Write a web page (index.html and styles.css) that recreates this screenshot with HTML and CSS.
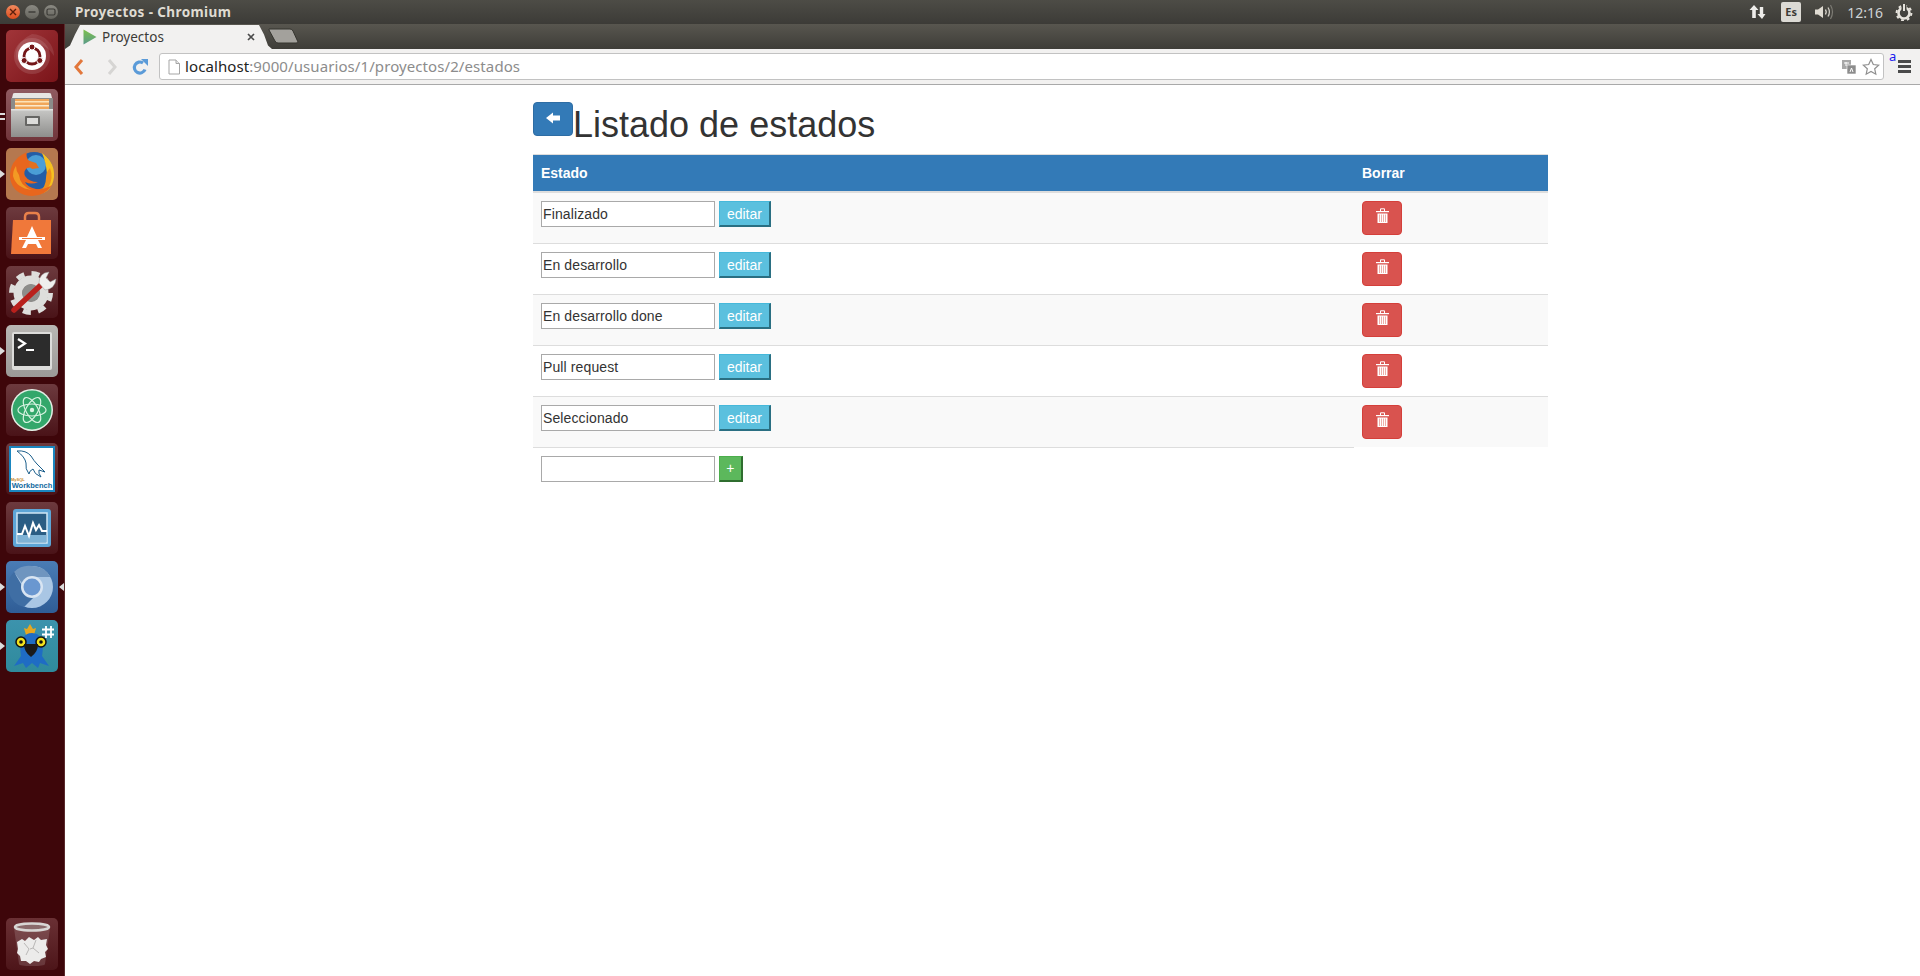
FILE: index.html
```html
<!DOCTYPE html>
<html>
	<head>
		<meta charset="utf-8">
		<title>Proyectos - Chromium</title>
		<link rel="stylesheet" href="styles.css">
	</head>
	<body>
		<div class="topbar">
			<div class="win-buttons">
				<span class="win-btn win-close">
					<svg viewBox="0 0 8 8" width="8" height="8"><path d="M1 1l6 6M7 1L1 7" stroke="#5c1f0c" stroke-width="1.4"/></svg>
				</span>
				<span class="win-btn">
					<svg viewBox="0 0 8 8" width="8" height="8"><path d="M0.5 4h7" stroke="#3b3a36" stroke-width="1.4"/></svg>
				</span>
				<span class="win-btn">
					<svg viewBox="0 0 10 8" width="10" height="8"><rect x="1" y="1" width="8" height="6" rx="1.5" fill="none" stroke="#3b3a36" stroke-width="1.2"/></svg>
				</span>
			</div>
			<div class="win-title">Proyectos - Chromium</div>
			<div class="tray">
				<svg class="tray-arrows" viewBox="0 0 18 16" width="18" height="16">
					<path d="M5 1l4.500 5H6.800v8H3.200V6H.5zM13 15l-4.500-5h2.300V3h3.400v7h2.300z" fill="#eeedea"/>
				</svg>
				<span class="tray-lang">Es</span>
				<svg class="tray-sound" viewBox="0 0 20 18" width="20" height="18">
					<path d="M1 6.500h3L9 3v12l-5-3.500H1z" fill="#dfdbd2"/>
					<path d="M11.500 6.500q1.500 2.500 0 5" fill="none" stroke="#dfdbd2" stroke-width="1.400"/>
					<path d="M14 4.500q2.800 4.500 0 9" fill="none" stroke="#cfccc4" stroke-width="1.300"/>
					<path d="M16.500 2q4 7 0 14" fill="none" stroke="#7d7b74" stroke-width="1.200"/>
				</svg>
				<span class="tray-clock">12:16</span>
				<svg class="tray-gear" viewBox="0 0 18 18" width="18" height="18">
					<circle cx="9" cy="10" r="5.500" fill="none" stroke="#e6e3dc" stroke-width="2.600"/>
					<circle cx="9" cy="10" r="7.400" fill="none" stroke="#e6e3dc" stroke-width="2" stroke-dasharray="2.800 3"/>
					<rect x="6.500" y="1" width="5" height="6" fill="#45443f"/>
					<path d="M9 1v7" stroke="#e6e3dc" stroke-width="2"/>
				</svg>
			</div>
		</div>

		<div class="desktop">
			<div class="launcher">
				<div class="tile tile-ubuntu">
					<svg viewBox="0 0 52 52">
						<path d="M26 4a22 22 0 0 1 22 22q-8-14-22-11-12 3-15 16Q6 14 26 4z" fill="#fff" fill-opacity=".1"/>
						<circle cx="26" cy="26" r="18" fill="#fff" fill-opacity=".12"/>
						<circle cx="26" cy="26" r="14" fill="#fff"/>
						<circle cx="26" cy="26" r="8" fill="none" stroke="#741719" stroke-width="2.800"/>
						<circle cx="26" cy="17" r="3" fill="#741719" stroke="#fff"/>
						<circle cx="18.200" cy="30.500" r="3" fill="#741719" stroke="#fff"/>
						<circle cx="33.800" cy="30.500" r="3" fill="#741719" stroke="#fff"/>
					</svg>
				</div>
				<div class="tile tile-files">
					<span class="pip pip-double"></span>
					<svg viewBox="0 0 52 52">
						<defs>
							<linearGradient id="cabinet" x1="0" y1="0" x2="0" y2="1">
								<stop offset="0" stop-color="#c8c8c6"/>
								<stop offset="1" stop-color="#8e8e8c"/>
							</linearGradient>
						</defs>
						<path d="M7 5q0-1 2-1h34q2 0 2 1l2 8H5z" fill="#e6e6e4"/>
						<rect x="5" y="9" width="42" height="38" rx="1" fill="#8b8b89"/>
						<rect x="9" y="10" width="34" height="12" fill="#f0a65a"/>
						<rect x="9" y="12" width="34" height="1.500" fill="#fde3b8"/>
						<rect x="9" y="16" width="34" height="1.500" fill="#fbe9cc"/>
						<path d="M5 20h42v28H5z" fill="url(#cabinet)"/>
						<rect x="5" y="20" width="42" height="1.500" fill="#e2e2e0"/>
						<rect x="19" y="27" width="15" height="10" rx="1" fill="#666664"/>
						<rect x="21" y="29" width="11" height="6" fill="#dcdcda"/>
					</svg>
				</div>
				<div class="tile tile-firefox">
					<span class="pip"></span>
					<svg viewBox="0 0 52 52">
						<circle cx="28" cy="23" r="19" fill="#245da6"/>
						<circle cx="30" cy="17" r="10" fill="#4a9ed6"/>
						<path d="M36 5q13 9 12 24-2 15-15 17 9-9 8-20-1-12-5-21z" fill="#f6c020"/>
						<path d="M44 20q4 10-2 20-4 4-9 6 7-8 7-16 0-6 4-10z" fill="#ef8f1e"/>
						<path d="M21 4Q3 12 4 30q3 17 22 18 13 0 20-11-7 5-16 4-9-2-11-7 7 3 13 0-9 0-13-6-2-5 2-8 3-1 6 0-4-3-3-7-5-1-3-13z" fill="#e8661d"/>
						<path d="M13 27q1 11 13 15-16-2-19-14 0-6 3-10 0 5 3 9z" fill="#f39a24"/>
						<path d="M24 13l6 2 3 5-7 1-3-3z" fill="#e2701f"/>
					</svg>
				</div>
				<div class="tile tile-software">
					<svg viewBox="0 0 52 52">
						<path d="M19 13v-3q0-4 4-4h6q4 0 4 4v3" fill="none" stroke="#e8814a" stroke-width="2.500"/>
						<path d="M7 13h38v34H5z" fill="#f0783a"/>
						<path d="M26 19l5 11H21zM20 33h12l4 8h-4l-2-4h-8l-2 4h-4z" fill="#fff"/>
						<rect x="13" y="30" width="26" height="3" fill="#fff"/>
						<rect x="16" y="31" width="20" height="1" fill="#f0783a"/>
					</svg>
				</div>
				<div class="tile tile-settings">
					<svg viewBox="0 0 52 52">
						<circle cx="25" cy="27" r="13" fill="none" stroke="#dededc" stroke-width="9"/>
						<circle cx="25" cy="27" r="19.500" fill="none" stroke="#dededc" stroke-width="5" stroke-dasharray="8 7.300"/>
						<circle cx="25" cy="27" r="9" fill="#8d8d8b"/>
						<path d="M8 44L36 18" stroke="#b9201c" stroke-width="5.500" stroke-linecap="round"/>
						<path d="M33 17q0-10 10-11l-3 6 4 4 6-3q-1 10-11 11z" fill="#efefed" stroke="#9c9c9a" stroke-width=".5"/>
					</svg>
				</div>
				<div class="tile tile-terminal">
					<span class="pip"></span>
					<svg viewBox="0 0 52 52">
						<rect x="6" y="7" width="40" height="38" rx="2" fill="#dcdcda"/>
						<rect x="8" y="9" width="36" height="32" fill="#2c2c2c"/>
						<path d="M12 14l7 4.500-7 4.500" fill="none" stroke="#fff" stroke-width="2.200"/>
						<rect x="20" y="24" width="8" height="2" fill="#fff"/>
					</svg>
				</div>
				<div class="tile tile-atom">
					<svg viewBox="0 0 52 52">
						<circle cx="26" cy="26" r="21" fill="#e4efe6"/>
						<circle cx="26" cy="26" r="19.500" fill="#33a76b"/>
						<g fill="none" stroke="#d8f3e2" stroke-width="1.200">
							<ellipse cx="26" cy="26" rx="14" ry="6"/>
							<ellipse cx="26" cy="26" rx="14" ry="6" transform="rotate(60 26 26)"/>
							<ellipse cx="26" cy="26" rx="14" ry="6" transform="rotate(120 26 26)"/>
						</g>
						<circle cx="26" cy="26" r="2.200" fill="#d8f3e2"/>
					</svg>
				</div>
				<div class="tile tile-workbench">
					<svg viewBox="0 0 52 52">
						<rect x="3" y="3" width="46" height="46" fill="#1a86c0"/>
						<rect x="5" y="5" width="42" height="42" fill="#fff"/>
						<path d="M11 8q9-1 14 5 3 5 6 8l8 8-6-2q-1 3 2 7-7-3-8-8-4 2-4 5-4-5-3-11-1-6-9-12z" fill="none" stroke="#1c5f8c" stroke-width="1"/>
					</svg>
					<span class="wb-label"><small>MySQL</small>Workbench</span>
				</div>
				<div class="tile tile-monitor">
					<svg viewBox="0 0 52 52">
						<rect x="7" y="7" width="38" height="38" rx="3" fill="#5da5d6"/>
						<rect x="11" y="11" width="30" height="30" fill="#2a5d84" stroke="#cfe6f5" stroke-width="1.500"/>
						<rect x="11.700" y="33" width="28.600" height="7.300" fill="#7fb3d6"/>
						<path d="M11 32h5l3-8 4 10 4-13 3 7 3-5 3 6h5" fill="none" stroke="#fff" stroke-width="2"/>
					</svg>
				</div>
				<div class="tile tile-chromium">
					<span class="pip"></span>
					<span class="pip pip-right"></span>
					<svg viewBox="0 0 52 52">
						<circle cx="26" cy="26" r="21" fill="#a9c6e4"/>
						<path d="M26 5a21 21 0 0 1 18.500 11H26a10 10 0 0 0-9.500 7L8 11a21 21 0 0 1 18-6z" fill="#6f95bf"/>
						<path d="M8 11l10 17a10 10 0 0 0 10 8L18 46A21 21 0 0 1 8 11z" fill="#3f6ea4"/>
						<circle cx="26" cy="26" r="11" fill="#d9e5f2"/>
						<circle cx="26" cy="26" r="8.500" fill="#6a97d0"/>
					</svg>
				</div>
				<div class="tile tile-bird">
					<span class="pip"></span>
					<svg viewBox="0 0 52 52">
						<path d="M24 4l3 5 3-1-2 7h-8l-2-7 3 1z" fill="#e6a820"/>
						<path d="M8 46l7-10q-2-12 2-18 3-5 9-5 7 0 9 6 3 7 1 17l7 10-9-3-2 5-6-5-6 5-3-5z" fill="#1f6cc4"/>
						<circle cx="15" cy="22" r="5" fill="#f2e21e" stroke="#111" stroke-width="1.500"/>
						<circle cx="35" cy="22" r="5" fill="#f2e21e" stroke="#111" stroke-width="1.500"/>
						<circle cx="15" cy="22" r="1.800" fill="#111"/>
						<circle cx="35" cy="22" r="1.800" fill="#111"/>
						<path d="M18 24h14q0 8-7 13-7-5-7-13z" fill="#1a1a1a"/>
						<path d="M40 6v12M45 6v12M36 9.500h12M36 14.500h12" stroke="#fff" stroke-width="1.800"/>
					</svg>
				</div>
				<div class="tile tile-trash">
					<svg viewBox="0 0 52 52">
						<path d="M8 10l5 36q0 2 13 2t13-2l5-36z" fill="#fff" fill-opacity=".14"/>
						<ellipse cx="26" cy="9" rx="17" ry="3.500" fill="#8a6a6b" stroke="#d8d6d4" stroke-width="2.500"/>
						<path d="M11 24l5-3 3 2 4-4 5 3 4-3 3 3 6-1-1 6 2 4-3 3 1 5-5 2-2 3-5-1-4 3-4-3-5 0-1-5-3-3 1-4z" fill="#ecebea"/>
						<path d="M18 25l5 6-3 6M30 22l-3 8 6 5M24 31l3-1" fill="none" stroke="#b9b7b6" stroke-width="1"/>
					</svg>
				</div>
			</div>

			<div class="browser">
				<div class="tabstrip">
					<div class="tab">
						<svg class="tab-favicon" viewBox="0 0 14 16" width="14" height="16">
							<defs>
								<linearGradient id="favicon-grad" x1="0" y1="0" x2="0" y2="1">
									<stop offset="0" stop-color="#7cc04b"/>
									<stop offset="1" stop-color="#5a9a8a"/>
								</linearGradient>
							</defs>
							<path d="M0.500 0.500l13 7.500-13 7.500z" fill="url(#favicon-grad)"/>
						</svg>
						<span class="tab-title">Proyectos</span>
						<svg class="tab-close" viewBox="0 0 8 8" width="8" height="8"><path d="M1 1l6 6M7 1L1 7" stroke="#4a4a4a" stroke-width="1.700"/></svg>
					</div>
					<svg class="newtab" viewBox="0 0 32 16" width="32" height="16">
						<path d="M1 1h21q2 0 3 2l5 11q0 1-2 1H10q-2 0-3-2L1 2z" fill="#a3a19c" stroke="#35342f"/>
					</svg>
				</div>

				<div class="toolbar">
					<svg class="nav-icon nav-back" viewBox="0 0 12 18" width="12" height="18">
						<path d="M9 2L3 9l6 7" fill="none" stroke="#e2773b" stroke-width="3"/>
					</svg>
					<svg class="nav-icon nav-forward" viewBox="0 0 12 18" width="12" height="18">
						<path d="M3 2l6 7-6 7" fill="none" stroke="#d6d5d3" stroke-width="3"/>
					</svg>
					<svg class="nav-icon nav-reload" viewBox="0 0 18 18" width="18" height="18">
						<path d="M14 11.500A5.500 5.500 0 1 1 12 5" fill="none" stroke="#5b9bd8" stroke-width="3.200"/>
						<path d="M10 1h7v7z" fill="#5b9bd8"/>
					</svg>
					<div class="omnibox">
						<svg class="page-icon" viewBox="0 0 14 16" width="14" height="16">
							<path d="M2 1h7l3.500 3.500V15H2z" fill="#fff" stroke="#a5a5a5"/>
							<path d="M9 1v3.500h3.500" fill="#e8e8e8" stroke="#a5a5a5"/>
						</svg>
						<div class="url"><span class="url-host">localhost</span>:9000/usuarios/1/proyectos/2/estados</div>
						<svg class="translate-icon" viewBox="0 0 14 14" width="14" height="14">
							<rect x="0" y="0" width="9" height="9" fill="#a8a8a8"/>
							<rect x="5" y="5" width="9" height="9" fill="#8c8c8c" stroke="#fff" stroke-width=".6"/>
							<path d="M2 3h5M4 2v4" stroke="#fff"/>
							<path d="M8 12l1.500-4 1.500 4" fill="none" stroke="#fff"/>
						</svg>
						<svg class="star-icon" viewBox="0 0 18 18" width="18" height="18">
							<path d="M9 1.500l2.300 5 5.400.6-4 3.700 1.100 5.400L9 13.500l-4.800 2.700 1.100-5.400-4-3.700 5.400-.6z" fill="#fff" stroke="#8e8e8e" stroke-width="1.200"/>
						</svg>
					</div>
					<div class="menu-wrap">
						<span class="ext-a">a</span>
						<div class="hamburger"><i></i><i></i><i></i></div>
					</div>
				</div>

				<div class="page">
					<div class="page-head">
						<button class="btn-back">
							<svg viewBox="0 0 14 12" width="14" height="12"><path d="M7 .5L0 6l7 5.500V8.500h7v-5H7z" fill="#fff"/></svg>
						</button>
						<h1>Listado de estados</h1>
					</div>

					<table class="estados">
						<thead>
							<tr>
								<th class="col-estado">Estado</th>
								<th>Borrar</th>
							</tr>
						</thead>
						<tbody>
							<tr class="odd">
								<td><input type="text" value="Finalizado"> <button class="btn-editar">editar</button></td>
								<td><button class="btn-trash"><svg viewBox="0 0 13 15" width="13" height="15"><use href="#trash"/></svg></button></td>
							</tr>
							<tr>
								<td><input type="text" value="En desarrollo"> <button class="btn-editar">editar</button></td>
								<td><button class="btn-trash"><svg viewBox="0 0 13 15" width="13" height="15"><use href="#trash"/></svg></button></td>
							</tr>
							<tr class="odd">
								<td><input type="text" value="En desarrollo done"> <button class="btn-editar">editar</button></td>
								<td><button class="btn-trash"><svg viewBox="0 0 13 15" width="13" height="15"><use href="#trash"/></svg></button></td>
							</tr>
							<tr>
								<td><input type="text" value="Pull request"> <button class="btn-editar">editar</button></td>
								<td><button class="btn-trash"><svg viewBox="0 0 13 15" width="13" height="15"><use href="#trash"/></svg></button></td>
							</tr>
							<tr class="odd">
								<td><input type="text" value="Seleccionado"> <button class="btn-editar">editar</button></td>
								<td><button class="btn-trash"><svg viewBox="0 0 13 15" width="13" height="15"><use href="#trash"/></svg></button></td>
							</tr>
							<tr>
								<td><input type="text" value=""> <button class="btn-add">+</button></td>
							</tr>
						</tbody>
					</table>
				</div>
			</div>
		</div>

		<svg class="defs" width="0" height="0">
			<symbol id="trash" viewBox="0 0 13 15">
				<path d="M0 3h13v1.200H0z" fill="#fff"/>
				<path d="M4.500 3V.8h4V3" fill="none" stroke="#fff"/>
				<path d="M1.500 5.500h10V15h-10z" fill="#fff"/>
				<path d="M3.500 6.500v7.500M5.500 6.500v7.500M7.500 6.500v7.500M9.500 6.500v7.500" stroke="#eeb0aa" stroke-width="1"/>
			</symbol>
		</svg>
	</body>
</html>
```

FILE: styles.css
```css
html, body {
	margin: 0;
	height: 100%;
}

body {
	display: flex;
	flex-direction: column;
	height: 976px;
	overflow: hidden;
	font-family: "Liberation Sans", Arial, sans-serif;
	font-size: 14px;
	color: #333;
	background: #fff;
}

.defs {
	position: absolute;
}

/* ubuntu panel */
.topbar {
	display: flex;
	align-items: center;
	height: 24px;
	flex: none;
	background: linear-gradient(#4d4c46, #3c3b37);
}

.win-buttons {
	display: flex;
	gap: 5px;
	margin-left: 6px;
	width: 69px;
}

.win-btn {
	display: flex;
	align-items: center;
	justify-content: center;
	width: 14px;
	height: 14px;
	border-radius: 50%;
	background: linear-gradient(#8b8a83, #64635c);
}

.win-close {
	background: linear-gradient(#f28a5e, #dc4c1d);
}

.win-title {
	font-family: "Noto Sans", sans-serif;
	font-size: 13.500px;
	font-weight: 700;
	letter-spacing: .4px;
	color: #dfdbd2;
}

.tray {
	display: flex;
	align-items: center;
	margin-left: auto;
	color: #dfdbd2;
}

.tray-arrows {
	margin-right: 14px;
}

.tray-lang {
	width: 20px;
	height: 20px;
	margin-right: 13px;
	border-radius: 2px;
	background: #dcdad4;
	color: #3c3b37;
	font-family: "Noto Sans", sans-serif;
	font-size: 11px;
	font-weight: 700;
	line-height: 20px;
	text-align: center;
}

.tray-sound {
	margin-right: 13px;
}

.tray-clock {
	margin-right: 12px;
	font-family: "Noto Sans", sans-serif;
	font-size: 14px;
	color: #cfd3d6;
}

.tray-gear {
	margin-right: 7px;
}

.desktop {
	display: flex;
	flex: 1;
	min-height: 0;
}

/* launcher */
.launcher {
	display: flex;
	flex-direction: column;
	gap: 7px;
	flex: none;
	width: 65px;
	padding: 6px 0;
	box-sizing: border-box;
	border-right: 1px solid #5a2a2c;
	background: #3e060a;
}

.tile {
	position: relative;
	flex: none;
	width: 52px;
	height: 52px;
	margin-left: 6px;
	border-radius: 5px;
	background: linear-gradient(#6d3a3e, #4a1318);
}

.tile svg {
	display: block;
	width: 52px;
	height: 52px;
}

.tile-ubuntu {
	background: linear-gradient(135deg, #a13539, #7a1419);
}

.tile-files {
	background: linear-gradient(#8f5a60, #71353b);
}

.tile-firefox {
	background: #b5784f;
}

.tile-terminal {
	background: linear-gradient(#b9b7b4, #9b9997);
}

.tile-chromium {
	background: linear-gradient(#4a7cb5, #2f5d96);
}

.tile-bird {
	background: linear-gradient(#3c93ad, #2f8a9c);
}

.tile-trash {
	margin-top: auto;
	background: linear-gradient(#6a3034, #4d1519);
}

.pip {
	position: absolute;
	left: -6px;
	top: 22px;
	width: 0;
	height: 0;
	border-left: 5px solid #dcdcdc;
	border-top: 4px solid transparent;
	border-bottom: 4px solid transparent;
}

.pip-right {
	left: auto;
	right: -6px;
	border-left: 0;
	border-right: 5px solid #dcdcdc;
}

.pip-double {
	top: 24px;
	width: 5px;
	height: 2px;
	border: 0;
	background: #dcdcdc;
	box-shadow: 0 5px 0 #dcdcdc;
}

.wb-label {
	position: absolute;
	left: 5px;
	right: 5px;
	bottom: 5px;
	color: #126a9e;
	font-size: 7.500px;
	font-weight: 700;
	line-height: 8px;
	text-align: center;
	white-space: nowrap;
}

.wb-label small {
	display: block;
	color: #c98a2e;
	font-size: 4px;
	line-height: 4px;
	text-align: left;
}

/* chromium */
.browser {
	display: flex;
	flex-direction: column;
	flex: 1;
	min-width: 0;
}

.tabstrip {
	display: flex;
	align-items: flex-end;
	flex: none;
	height: 25px;
	background: linear-gradient(#58564f, #3e3d38);
}

.tab {
	display: flex;
	align-items: center;
	flex: none;
	width: 207px;
	height: 24px;
	padding-left: 18px;
	box-sizing: border-box;
	background: #f2f1f0;
	clip-path: polygon(0 100%, 5px 85%, 10px 40%, 15px 0, 194px 0, 199px 40%, 203px 85%, 207px 100%);
}

.tab-favicon {
	margin-right: 5px;
}

.tab-title {
	width: 145px;
	font-family: "Noto Sans", sans-serif;
	font-size: 13.500px;
	color: #3c3b37;
}

.newtab {
	margin: 0 0 5px -4px;
}

.toolbar {
	display: flex;
	align-items: center;
	flex: none;
	height: 36px;
	box-sizing: border-box;
	border-bottom: 1px solid #a9a9a9;
	background: #f2f1f0;
}

.nav-back {
	margin-left: 8px;
}

.nav-forward {
	margin-left: 21px;
}

.nav-reload {
	margin-left: 13px;
}

.omnibox {
	display: flex;
	align-items: center;
	width: 1725px;
	height: 27px;
	margin-left: 10px;
	box-sizing: border-box;
	border: 1px solid #c2c2c2;
	border-radius: 3px;
	background: #fff;
}

.page-icon {
	margin-left: 7px;
}

.url {
	flex: 1;
	margin: -2px 0 0 4px;
	font-family: "Noto Sans", sans-serif;
	font-size: 15px;
	letter-spacing: .09px;
	color: #8c8c8c;
}

.url-host {
	color: #222;
}

.translate-icon {
	margin-right: 6px;
}

.star-icon {
	margin-right: 3px;
}

.menu-wrap {
	position: relative;
	flex: 1;
	align-self: stretch;
}

.ext-a {
	position: absolute;
	left: 5px;
	top: -2px;
	color: #1a1aee;
	font-family: "Noto Sans", sans-serif;
	font-size: 13px;
}

.hamburger {
	position: absolute;
	left: 14px;
	top: 11px;
	width: 13px;
}

.hamburger i {
	display: block;
	height: 3px;
	margin-bottom: 2px;
	background: #4a4a4a;
}

/* page */
.page {
	flex: 1;
	padding-left: 468px;
	background: #fff;
}

.page-head {
	display: flex;
	align-items: flex-start;
	width: 1015px;
	padding-top: 17px;
	margin-bottom: 9px;
}

.btn-back {
	display: flex;
	align-items: center;
	justify-content: center;
	width: 40px;
	height: 34px;
	padding: 0 0 3px;
	border: 1px solid #2e6da4;
	border-radius: 4px;
	background: #337ab7;
}

h1 {
	margin: 3px 0 0;
	font-size: 36px;
	font-weight: 500;
	line-height: 40px;
}

.estados {
	width: 1015px;
	border-collapse: collapse;
	border-spacing: 0;
}

.estados th {
	padding: 8px;
	border-top: 1px solid #ddd;
	border-bottom: 2px solid #ddd;
	background: #337ab7;
	color: #fff;
	line-height: 20px;
	text-align: left;
}

.col-estado {
	width: 805px;
}

.estados td {
	padding: 8px;
	border-top: 1px solid #ddd;
	line-height: 20px;
	vertical-align: top;
}

.estados tr.odd td {
	background: #f9f9f9;
}

.estados input {
	width: 174px;
	height: 26px;
	padding: 1px 1px;
	box-sizing: border-box;
	border: 1px solid #a9a9a9;
	background: #fff;
	color: #333;
	font-family: "Liberation Sans", Arial, sans-serif;
	font-size: 14px;
	letter-spacing: .12px;
	vertical-align: top;
}

.btn-editar,
.btn-add {
	height: 26px;
	padding: 0;
	box-sizing: border-box;
	border-style: solid;
	border-width: 1px 2px 2px 1px;
	color: #fff;
	font-family: "Liberation Sans", Arial, sans-serif;
	font-size: 14px;
	vertical-align: top;
}

.btn-editar {
	width: 52px;
	border-color: #46b8da #2a6f82 #2a6f82 #46b8da;
	background: #5bc0de;
}

.btn-add {
	width: 24px;
	border-color: #4cae4c #2f6d2f #2f6d2f #4cae4c;
	background: #5cb85c;
}

.btn-trash {
	display: block;
	width: 40px;
	height: 34px;
	padding: 0 0 5px;
	border: 1px solid #d43f3a;
	border-radius: 4px;
	background: #d9534f;
}

.btn-trash svg {
	display: block;
	margin: 0 auto;
}
```
